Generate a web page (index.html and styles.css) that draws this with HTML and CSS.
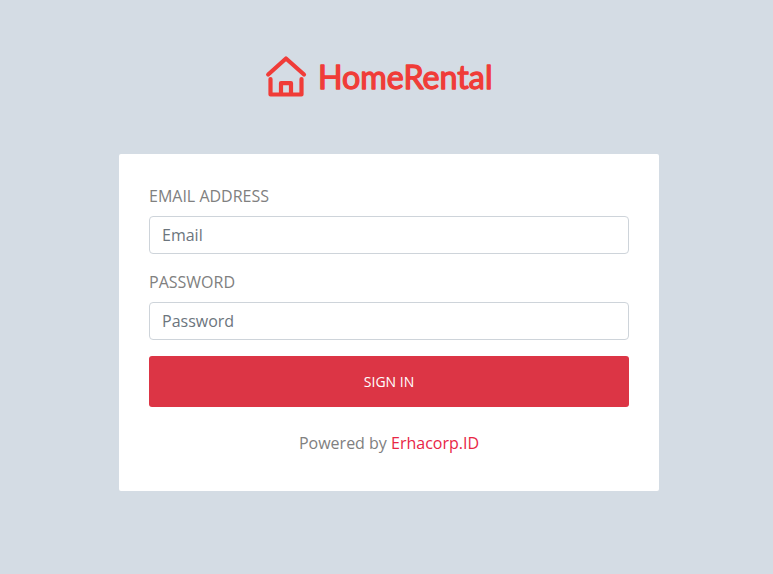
FILE: index.html
```html
<!DOCTYPE html>
<html lang="en">
<head>
<meta charset="utf-8">
<title>HomeRental</title>
<link rel="stylesheet" href="styles.css">
</head>
<body>
<main class="login">
  <div class="brand">
    <svg class="brand-icon" width="42" height="42" viewBox="0 0 42 42" aria-hidden="true">
      <path d="M3.200 19.500 21 3.500 39 19.500M5.500 24V39.500H36.500V24M16 39V28.200H26V39"/>
    </svg>
    <svg class="brand-name" width="176" height="44" viewBox="0 0 176 44">
      <text x="0" y="33.500" textLength="174.500" lengthAdjust="spacingAndGlyphs">HomeRental</text>
    </svg>
  </div>
  <form class="card">
    <label class="label" for="email">Email Address</label>
    <input class="input" id="email" type="email" placeholder="Email">
    <label class="label" for="password">Password</label>
    <input class="input" id="password" type="password" placeholder="Password">
    <button class="submit" type="button">SIGN IN</button>
    <p class="footer">Powered by <a class="link" href="#">Erhacorp.ID</a></p>
  </form>
</main>
</body>
</html>
```
FILE: styles.css
```css
* { box-sizing: border-box; }
body {
  margin: 0;
  min-height: 574px;
  background: #d4dce4;
  color: #808080;
  font: 16px/24px "Open Sans", sans-serif;
}
.login { width: 540px; margin-left: 119px; padding-top: 55px; }
.brand { display: flex; height: 99px; padding-left: 146px; gap: 11px; }
.brand-icon { fill: none; stroke: #f03c38; stroke-width: 4.2; stroke-linecap: round; stroke-linejoin: round; }
.brand-name {
  fill: #f03c38;
  stroke: #f03c38;
  stroke-width: 1.3;
  stroke-linejoin: round;
  font: 400 32.5px Lato, sans-serif;
  overflow: visible;
}
.card { height: 337px; padding: 30px; background: #fff; border-radius: 2px; }
.label { display: block; height: 24px; margin-bottom: 8px; text-transform: uppercase; }
.input {
  display: block;
  width: 100%;
  height: 38px;
  margin: 0 0 16px;
  padding: 6px 12px;
  border: 1px solid #ced4da;
  border-radius: 4px;
  background: #fff;
  font: inherit;
}
.input::placeholder { color: #6c757d; opacity: 1; }
.submit {
  display: block;
  width: 100%;
  height: 51px;
  padding: 0;
  border: 0;
  border-radius: 3px;
  background: #dc3545;
  color: #fff;
  font: 14px/21px "Open Sans", sans-serif;
}
.footer { margin: 24px 0 0; text-align: center; }
.link { color: #e82646; text-decoration: none; }
```
